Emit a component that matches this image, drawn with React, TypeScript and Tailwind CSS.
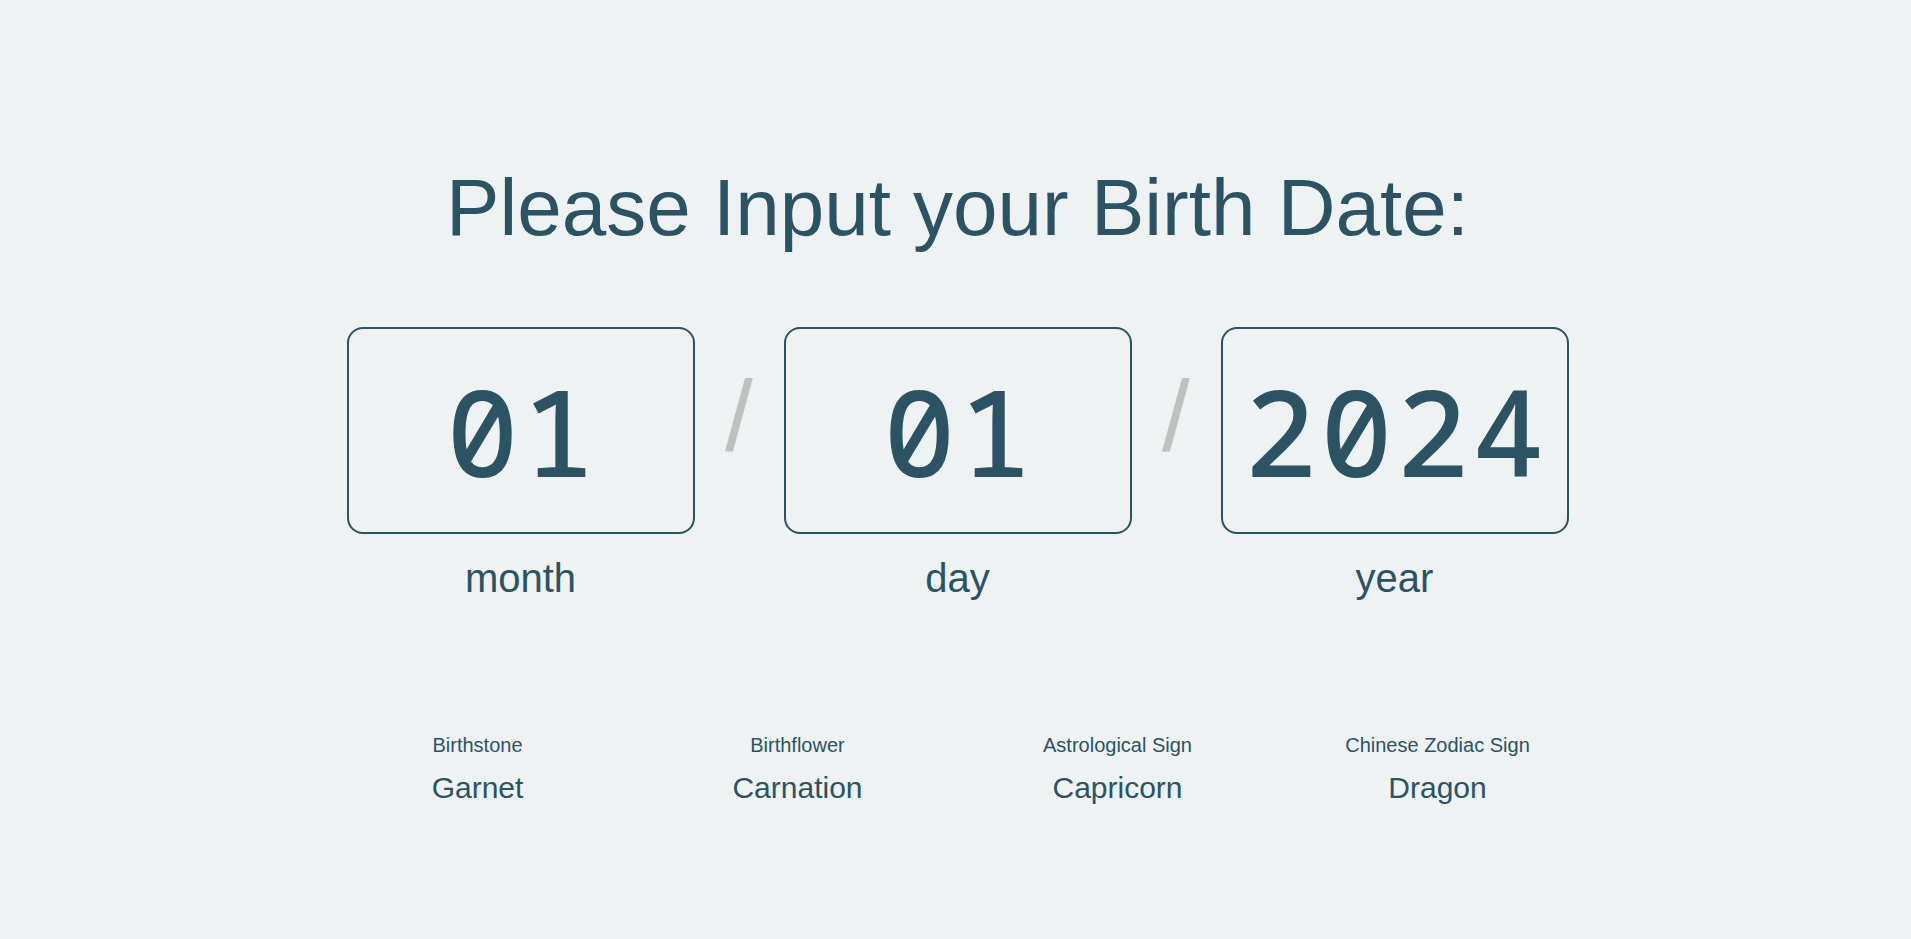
import React from 'react'

interface Field {
  label: string
  value: string
}

interface Info {
  title: string
  value: string
}

const fields: Field[] = [
  { label: 'month', value: '01' },
  { label: 'day', value: '01' },
  { label: 'year', value: '2024' },
]

const infos: Info[] = [
  { title: 'Birthstone', value: 'Garnet' },
  { title: 'Birthflower', value: 'Carnation' },
  { title: 'Astrological Sign', value: 'Capricorn' },
  { title: 'Chinese Zodiac Sign', value: 'Dragon' },
]

function DateBox({ label, value }: Field): React.JSX.Element {
  return (
    <div className="flex flex-col items-center">
      <div className="w-[348px] h-[207px] border-2 border-[#2c5364] rounded-2xl flex items-center justify-center pt-[1px]">
        <span className="text-[120px] leading-none font-medium tracking-[4px] pl-[4px] font-['Noto_Sans_Mono',monospace]">
          {value}
        </span>
      </div>
      <span className="mt-[24px] text-[40px] leading-none">{label}</span>
    </div>
  )
}

function Slash(): React.JSX.Element {
  return (
    <div className="w-[89px] flex justify-center pt-[39px]">
      <span className="text-[100px] leading-none text-[#c0c0c0]">/</span>
    </div>
  )
}

function App(): React.JSX.Element {
  return (
    <div className="min-h-[939px] w-full bg-[#eef2f3] text-[#2c5364] font-['Liberation_Sans',Arial,sans-serif] flex flex-col items-center pl-1 pt-[168px]">
      <h1 className="text-[80px] leading-none font-normal">Please Input your Birth Date:</h1>
      <div className="flex mt-[79px]">
        <DateBox {...fields[0]} />
        <Slash />
        <DateBox {...fields[1]} />
        <Slash />
        <DateBox {...fields[2]} />
      </div>
      <div className="grid grid-cols-4 w-[1280px] mt-[137px]">
        {infos.map((info) => (
          <div key={info.title} className="flex flex-col items-center">
            <span className="text-[20px] leading-none">{info.title}</span>
            <span className="mt-[18px] text-[30px] leading-none">{info.value}</span>
          </div>
        ))}
      </div>
    </div>
  )
}

export default App
